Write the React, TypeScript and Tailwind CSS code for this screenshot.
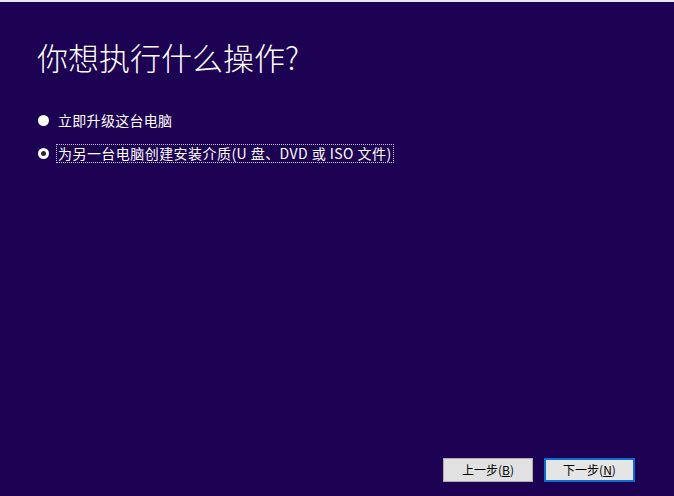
const font = { fontFamily: '"Noto Sans CJK SC", "Noto Sans", sans-serif' };

function Radio({ checked }: { checked?: boolean }) {
  return (
    <span className="flex h-[11px] w-[11px] shrink-0 items-center justify-center rounded-full bg-white">
      {checked && <span className="h-[5px] w-[5px] rounded-full bg-[#2a2a2a]" />}
    </span>
  );
}

export default function App() {
  return (
    <div
      className="flex h-[496px] w-[674px] flex-col border-t-[2px] border-[#e8e8ee] bg-[#1d0152] text-white"
      style={font}
    >
      <h1 className="ml-[37px] mt-[33px] text-[31px] font-light leading-[44px]">
        你想执行什么操作?
      </h1>

      <div className="ml-[38px] mt-[31px] flex flex-col gap-[13px] text-[14px]">
        <label className="flex items-center gap-[8px] leading-[19px]">
          <Radio />
          <span className="px-[1px] py-[1px] tracking-[0.3px]">立即升级这台电脑</span>
        </label>
        <label className="flex items-center gap-[7px] leading-[17px]">
          <Radio checked />
          <span className="border border-dotted border-[#c8c8d8] px-[1px] py-[0px] tracking-[0.45px]">
            为另一台电脑创建安装介质(U 盘、DVD 或 ISO 文件)
          </span>
        </label>
      </div>

      <div className="mt-auto mb-[14px] mr-[39px] flex justify-end gap-[11px] text-[12px] text-black">
        <button className="h-[24px] w-[90px] border border-[#adadad] bg-[#e1e1e1]">
          上一步(<span className="underline">B</span>)
        </button>
        <button className="h-[24px] w-[91px] border-2 border-[#0a6fd0] bg-[#e5e5e5]">
          下一步(<span className="underline">N</span>)
        </button>
      </div>
    </div>
  );
}
